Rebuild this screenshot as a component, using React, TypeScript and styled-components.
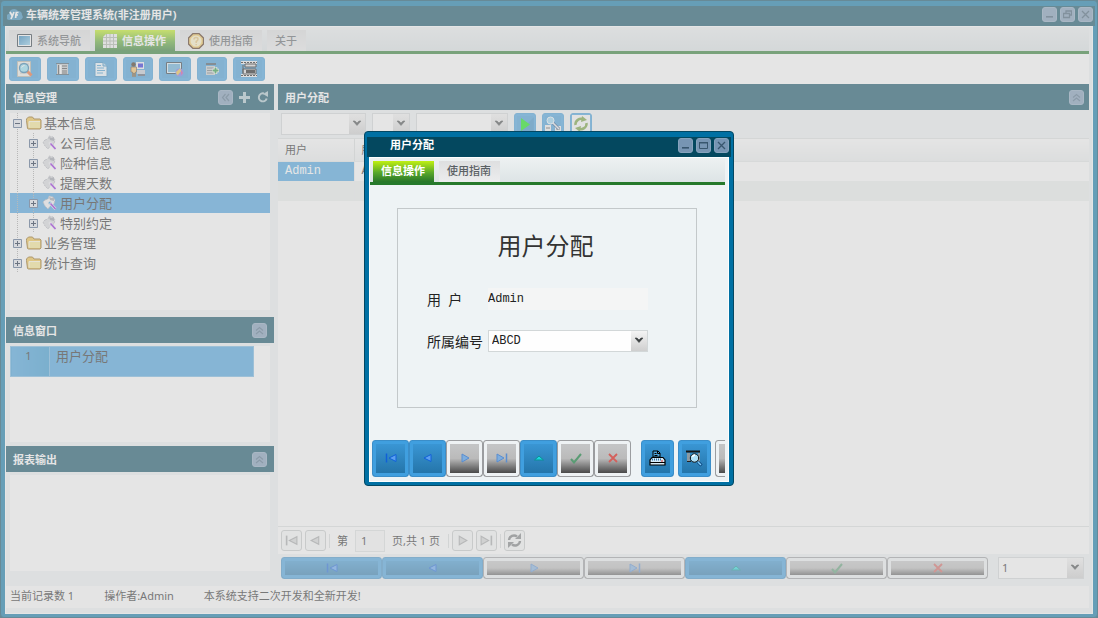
import React from "react";
import styled, { createGlobalStyle, css } from "styled-components";

const ui = `"Noto Sans", "Noto Sans CJK SC", sans-serif`;
const mono = `"Liberation Mono", "Noto Sans CJK SC", monospace`;

const GlobalStyle = createGlobalStyle`
  *, *::before, *::after { box-sizing: border-box; }
  body { margin: 0; background: #04485f; font: 11px/16px ${ui}; color: #222; }
  h1, h2, ul, p { margin: 0; padding: 0; font-weight: normal; list-style: none; }
  button, input, select { font: inherit; color: inherit; margin: 0; }
  svg { display: block; flex: none; }
`;

/* ---------- window chrome ---------- */

const WindowFrame = styled.div`
  display: flex;
  flex-direction: column;
  padding: 5px 4px 3px;
  border: 1px solid #034863;
  border-radius: 4px;
  background: #0070a3;
`;

const MainWindow = styled(WindowFrame)`
  min-height: 100vh;
`;

const TitleBar = styled.header<{ $inset?: boolean }>`
  display: flex;
  align-items: center;
  gap: 3px;
  height: 20px;
  margin: 0 -2px;
  padding: 0 2px 3px ${(p) => (p.$inset ? 23 : 4)}px;
  background: #04485f;
  color: #fff;
`;

const WindowTitle = styled.h1`
  flex: 1;
  font-size: 11px;
  font-weight: bold;
  line-height: 16px;
`;

const ChromeButton = styled.button`
  display: grid;
  place-items: center;
  width: 15px;
  height: 15px;
  padding: 0;
  border: 1px solid #86a3bd;
  border-radius: 3px;
  background: #7795b3;
`;

const ChromeGroup = styled.div`
  display: flex;
  gap: 3px;
`;

const WindowBody = styled.div`
  flex: 1;
  display: flex;
  flex-direction: column;
  min-width: 0;
  border: 1px solid #fcfefe;
  padding-right: 3px;
  background: #eef3f5;
`;

/* ---------- tabs ---------- */

const TabBar = styled.nav`
  display: flex;
  gap: 5px;
  padding: 3px 3px 0;
  border-bottom: 3px solid #26792b;
  background: linear-gradient(#edf1f2, #dde4e6);
`;

const Tab = styled.button<{ $active?: boolean }>`
  display: flex;
  align-items: center;
  gap: 5px;
  height: 21px;
  padding: 0 9px 0 8px;
  border: 0;
  background: linear-gradient(#dedfe0, #ecedee);
  color: #5a6064;
  font-weight: ${(p) => (p.$active ? "bold" : "500")};
  line-height: 16px;
  ${(p) =>
    p.$active &&
    css`
      background: linear-gradient(#c0f012, #58a82a 55%, #27752a);
      color: #fff;
    `}
`;

/* ---------- main toolbar ---------- */

const Toolbar = styled.div`
  display: flex;
  gap: 6px;
  padding: 3px;
  background: #fefefe;
`;

const blueFace = css`
  border: 1px solid #3b8ec9;
  background: linear-gradient(#3c99d8, #2272a6);
  box-shadow: inset 0 0 0 3px #409fdf;
`;

const greyFace = css`
  border: 1px solid #9b9da0;
  background: linear-gradient(#c3c4c5 15%, #bababa 50%, #484848 92%);
  box-shadow: inset 0 0 0 3px #eef2f4;
`;

const ToolButton = styled.button<{ $narrow?: boolean }>`
  display: grid;
  place-items: center;
  width: ${(p) => (p.$narrow ? 30 : 32)}px;
  height: 24px;
  padding: 0;
  border: 1px solid #3b98d6;
  border-radius: 3px;
  background: #3d98d6;
  box-shadow: inset 0 0 0 2px #409fdf;
`;

const SmallToolButton = styled(ToolButton)`
  width: 22px;
  height: 22px;
`;

/* ---------- panels ---------- */

const Workspace = styled.main`
  flex: 1;
  display: grid;
  grid-template-columns: 268px minmax(0, 1fr);
  column-gap: 4px;
`;

const SideColumn = styled.aside`
  display: flex;
  flex-direction: column;
  padding-bottom: 11px;
`;

const SideSection = styled.section<{ $grow?: boolean }>`
  display: flex;
  flex-direction: column;
  flex: ${(p) => (p.$grow ? "1 0 auto" : "none")};
  padding-bottom: ${(p) => (p.$grow ? 3 : 0)}px;
`;

const PanelHeader = styled.header<{ $tools?: boolean }>`
  display: flex;
  align-items: center;
  gap: 5px;
  height: 26px;
  padding: 0 ${(p) => (p.$tools ? 5 : 7)}px 0 7px;
  background: #04485f;
  color: #fff;
`;

const PanelTitle = styled.h2`
  flex: 1;
  padding-top: 2px;
  font-size: 11px;
  font-weight: bold;
  line-height: 16px;
`;

const PlainIconButton = styled.button`
  display: grid;
  place-items: center;
  width: 13px;
  height: 13px;
  padding: 0;
  border: 0;
  background: none;
  color: #a9c4cc;
`;

const Box = styled.div`
  flex: 1;
  min-height: 96px;
  margin: 3px 4px 4px;
  background: #fefefe;
`;

const Tree = styled.ul`
  font-size: 13px;
  line-height: 20px;
`;

const TreeRow = styled.li<{ $selected?: boolean }>`
  display: flex;
  align-items: center;
  height: 20px;
  background: ${(p) => (p.$selected ? "#429fe0" : "transparent")};
`;

const Guide = styled.span`
  display: flex;
  align-items: center;
  width: 16px;
  height: 20px;
  padding-left: 3px;
  background: repeating-linear-gradient(#a4a4a4 0 1px, transparent 1px 2px) 7px 0 / 1px 100% no-repeat;
`;

const TreeLabel = styled.span`
  margin-left: 2px;
`;

const WindowList = styled.table`
  width: 244px;
  border-collapse: collapse;
  background: #409fdf;
  font-size: 13px;
  line-height: 18px;

  th,
  td {
    height: 30px;
    padding: 0;
    border: 1px solid #6fb4e2;
    vertical-align: top;
    font-weight: normal;
    text-align: left;
  }
  th {
    width: 39px;
    padding-right: 3px;
    font-size: 11px;
    text-align: center;
    background: linear-gradient(90deg, #409fdf, #2a93cf);
  }
  td {
    padding-left: 6px;
  }
`;

/* ---------- combo box ---------- */

const ComboShell = styled.span<{ $width: number }>`
  position: relative;
  display: block;
  width: ${(p) => p.$width}px;
  height: 22px;
`;

const ComboSelect = styled.select`
  appearance: none;
  width: 100%;
  height: 22px;
  padding: 0 18px 0 3px;
  border: 1px solid #d2d7d8;
  border-radius: 0;
  background: linear-gradient(#f4f4f4, #cfcfcf) right 0 top 0 / 16px 100% no-repeat #fefefe;
`;

const ComboArrow = styled.svg`
  position: absolute;
  right: 4px;
  top: 7px;
  pointer-events: none;
`;

/* ---------- record grid ---------- */

const ContentPanel = styled.section`
  display: flex;
  flex-direction: column;
  min-width: 0;
`;

const FilterBar = styled.div`
  display: flex;
  gap: 6px;
  padding: 3px 3px;
`;

const GridArea = styled.div`
  flex: 1;
  border-top: 1px solid #dde1e1;
  background: #fefefe;
`;

const Records = styled.table`
  width: 100%;
  border-collapse: collapse;
  table-layout: fixed;

  th,
  td {
    padding: 0 7px;
    text-align: left;
    font-weight: normal;
    white-space: nowrap;
  }
  th {
    height: 22px;
    background: linear-gradient(#fdfdfd, #eceff0);
    border-right: 1px solid #d8dcdc;
    border-bottom: 1px solid #e2e6e6;
  }
  th:last-child {
    border-right: 0;
  }
  td {
    height: 20px;
    font: 12px/16px ${mono};
    border-right: 1px solid #eceff0;
  }
  td:last-child {
    border-right: 0;
  }
  td[data-current] {
    background: #409fdf;
    color: #fff;
  }
  tfoot td {
    background: #ecf0ee;
  }
`;

const FirstColumn = styled.col`
  width: 76px;
`;
const SecondColumn = styled.col`
  width: 90px;
`;

const Pager = styled.div`
  display: flex;
  align-items: center;
  height: 28px;
  padding: 0 3px;
  border-top: 1px solid #dde1e1;
  background: #fefefe;
`;

const PagerButton = styled.button`
  display: grid;
  place-items: center;
  width: 21px;
  height: 21px;
  margin-right: 3px;
  padding: 0;
  border: 1px solid #c4c8c8;
  border-radius: 3px;
  background: #f7f8f8;
`;

const Divider = styled.span`
  width: 1px;
  height: 14px;
  margin-right: 3px;
  background: #d8dcdc;
`;

const PageLabel = styled.label`
  display: flex;
  align-items: center;
  gap: 7px;
  margin: 0 8px 0 4px;
`;

const PageInput = styled.input`
  width: 30px;
  height: 22px;
  padding: 0 5px;
  border: 1px solid #dde1e1;
  background: #f8f9f9;
`;

const RecordNav = styled.div`
  display: flex;
  gap: 10px;
  padding: 3px 5px 7px 3px;
`;

const NavGroup = styled.div`
  flex: 1;
  display: flex;
`;

const NavButton = styled.button<{ $blue?: boolean }>`
  flex: 1;
  display: grid;
  place-items: center;
  height: 22px;
  padding: 0;
  border-radius: 3px;
  ${(p) => (p.$blue ? blueFace : greyFace)}
`;

const StatusBar = styled.footer`
  display: flex;
  gap: 30px;
  margin-bottom: 5px;
  padding: 2px 4px 4px;
  background: #fcfcfc;
`;

/* ---------- dialog ---------- */

const Mask = styled.div`
  position: fixed;
  inset: 0;
  display: grid;
  place-items: center;
  padding-bottom: 2px;
  background: rgba(204, 204, 204, 0.5);
`;

const DialogFrame = styled(WindowFrame)`
  width: 370px;
`;

const FormBox = styled.form`
  margin: 23px 28px 0 27px;
  padding: 21px 32px 55px 29px;
  border: 1px solid #c3c8ca;
  color: #222;
`;

const FormTitle = styled.h2`
  font-size: 24px;
  line-height: 32px;
  text-align: center;
  color: #333;
`;

const FormRow = styled.div`
  display: grid;
  grid-template-columns: 61px 160px;
  align-items: center;
  margin-top: 20px;
  font: 12px/16px ${mono};

  &:first-of-type {
    margin-top: 26px;
  }
  label {
    padding-top: 2px;
    font: 14px/20px ${ui};
    white-space: pre;
  }
`;

const ReadonlyInput = styled.input`
  height: 22px;
  width: 160px;
  padding: 0;
  border: 0;
  background: #f4f5f5;
`;

const DialogActions = styled.div`
  display: flex;
  margin: 32px 0 4px 2px;
  overflow: hidden;
`;

const SquareButton = styled(NavButton)<{ $tool?: boolean }>`
  flex: none;
  width: ${(p) => (p.$tool ? 33 : 37)}px;
  height: 37px;
`;

const ToolSet = styled.div`
  display: flex;
  gap: 4px;
  margin-left: 10px;
`;

/* ---------- icons ---------- */

const MinimizeIcon = () => (
  <svg width="9" height="9" viewBox="0 0 9 9"><path d="M1 6h7v1.6H1z" fill="#38566e" /></svg>
);
const MaximizeIcon = () => (
  <svg width="9" height="9" viewBox="0 0 9 9"><path d="M.5 1.5h8v6h-8z" fill="none" stroke="#38566e" /><path d="M0 1h9v1.5H0z" fill="#38566e" /></svg>
);
const RestoreIcon = () => (
  <svg width="9" height="9" viewBox="0 0 9 9"><path d="M3 3V1h5.5v4H6.5M.5 3.5h6v4h-6z" fill="none" stroke="#38566e" strokeWidth="1.3" /></svg>
);
const CloseIcon = () => (
  <svg width="9" height="9" viewBox="0 0 9 9"><path d="M1 1l7 7M8 1L1 8" stroke="#38566e" strokeWidth="1.3" /></svg>
);
const CollapseIcon = ({ side }: { side?: boolean }) => (
  <svg width="9" height="9" viewBox="0 0 9 9">
    <path
      d={side ? "M4.5 1L1.5 4.5l3 3.5M8 1L5 4.5 8 8" : "M1 4.5l3.5-3 3.5 3M1 8l3.5-3L8 8"}
      fill="none" stroke="#4b6b85" strokeWidth="1.2"
    />
  </svg>
);
const PlusIcon = () => (
  <svg width="11" height="11" viewBox="0 0 11 11"><path d="M4 0h3v4h4v3H7v4H4V7H0V4h4z" fill="currentColor" /></svg>
);
const ReloadIcon = () => (
  <svg width="12" height="12" viewBox="0 0 12 12">
    <path d="M7 2.5A4 4 0 1 0 9.7 7.5" fill="none" stroke="currentColor" strokeWidth="2" />
    <path d="M6 3l5-3v6z" fill="currentColor" />
  </svg>
);
const AppLogo = () => (
  <svg width="16" height="14" viewBox="0 0 16 14">
    <path d="M3 12a3 3 0 0 1-1-6 5 5 0 0 1 9-3 4 4 0 0 1 4 4 3 3 0 0 1-2 5z" fill="#2d86b8" />
    <path d="M3 4l2.3 4L7 4M5.3 8L4 11M11.5 4.5H9.3L8.6 10M8 7h3" fill="none" stroke="#fff" strokeWidth="1.7" />
  </svg>
);
const ScreenIcon = () => (
  <svg width="15" height="13" viewBox="0 0 15 13">
    <defs><linearGradient id="scr" x1="0" y1="0" x2="1" y2="1"><stop stopColor="#1f7cb8" /><stop offset="1" stopColor="#8fd0ee" /></linearGradient></defs>
    <path d="M.5.5h14v12H.5z" fill="#fff" stroke="#22303a" /><path d="M2 2h11v9H2z" fill="url(#scr)" />
  </svg>
);
const GridIcon = () => (
  <svg width="14" height="14" viewBox="0 0 14 14">
    <path d="M3 0h11v14H0V3z" fill="#f2f2f2" />
    <path d="M3.5 0v14M7 0v14M10.5 0v14M0 3.5h14M0 7h14M0 10.5h14" stroke="#a9b3a4" />
  </svg>
);
const HelpIcon = () => (
  <svg width="16" height="16" viewBox="0 0 16 16">
    <path d="M5 .5h6L15.500 5v6L11 15.500H5L.5 11V5z" fill="#f5c858" stroke="#4a260c" strokeWidth="1.3" />
    <circle cx="8" cy="8" r="5.500" fill="#fdf3c4" />
    <path d="M6 6.500Q6 4.500 8 4.500t2 1.700Q10 7.500 8.200 8.500V10M8.200 11v1.200" fill="none" stroke="#e6c070" strokeWidth="1.500" />
  </svg>
);
const SearchDocIcon = () => (
  <svg width="16" height="16" viewBox="0 0 16 16">
    <path d="M.5.5h13v15H.5z" fill="#f1efe6" stroke="#b5b2a4" /><path d="M3 3h9M3 12h7" stroke="#b8b8b4" />
    <path d="M10 10l4.500 4.500" stroke="#f0642a" strokeWidth="3" />
    <circle cx="7" cy="7" r="4.500" fill="#8fe0f4" stroke="#2878a8" strokeWidth="1.300" /><path d="M4.500 6.500q1-2 3-2" stroke="#fff" fill="none" />
  </svg>
);
const ListIcon = () => (
  <svg width="16" height="14" viewBox="0 0 16 14">
    <path d="M2 1h11v12H2z" fill="#c4c8ca" /><path d="M1 1.500h13M1 12.500h13" stroke="#3c5666" /><path d="M3.500 3v9M7 4h5M7 6.500h5M7 9h5M7 11h5" stroke="#444" />
    <path d="M5 3h1.500v9H5z" fill="#fff" />
  </svg>
);
const DocIcon = () => (
  <svg width="14" height="15" viewBox="0 0 14 15">
    <path d="M1 .5h8L13 4v10.500H1z" fill="#e9f5fd" stroke="#2f86c0" /><path d="M9 .5V4h4" fill="#a8d5ef" stroke="#2f86c0" />
    <path d="M3 3.500h4M3 6h7M3 8.500h8M3 11h6" stroke="#3f98d0" />
  </svg>
);
const UserPcIcon = () => (
  <svg width="16" height="16" viewBox="0 0 16 16">
    <path d="M6 1h8v7H6z" fill="#eef0f5" /><path d="M8 2.500h5v4H8z" fill="#2320d8" /><path d="M7 9h8v4H7z" fill="#c3c8d2" /><path d="M8 13h7v2H8z" fill="#555d6c" />
    <circle cx="3.500" cy="3.500" r="2.200" fill="#3a2410" /><path d="M1 6h5.500v5H5.500v4.500h-1V12h-1v3.500h-1V11H1z" fill="#f7bf60" stroke="#5c3c1b" strokeWidth=".7" />
  </svg>
);
const ScreenGlobeIcon = () => (
  <svg width="18" height="15" viewBox="0 0 18 15">
    <path d="M.5.500h15v11H.5z" fill="#d9eef8" stroke="#22303a" /><path d="M2 2h12v8H2z" fill="#5cabd8" />
    <circle cx="13.500" cy="10.500" r="4" fill="#7070e8" /><path d="M10 10q3-3 4-3.500 2 2 0 4t-2 3q-2-1-2-3.500z" fill="#f0c03e" /><path d="M15 8l2 3-2 2z" fill="#d63f90" />
  </svg>
);
const DatabaseAddIcon = () => (
  <svg width="14" height="14" viewBox="0 0 14 14">
    <path d="M1 1h10v2H1z" fill="#3c4f5a" /><path d="M1 4h9v9H1z" fill="#c6ccce" /><path d="M2 6h7M2 8.500h7M2 11h7" stroke="#6b767b" />
    <path d="M10.500 5v7M7 8.500h7" stroke="#fff" strokeWidth="3.500" /><path d="M10.500 5.500v6M7.500 8.500h6" stroke="#1f923b" strokeWidth="1.800" />
  </svg>
);
const PrinterBigIcon = () => (
  <svg width="18" height="16" viewBox="0 0 18 16">
    <path d="M1 0h16v3H1zM1 13h16v3H1z" fill="#efefef" /><path d="M1 1.500h16M1 14.500h16" stroke="#111" strokeDasharray="2 1" />
    <path d="M5 3h11v3H5zM3 8h13v5H3z" fill="#dfdfdf" stroke="#111" /><path d="M6 9h9v3H6z" fill="#111" /><path d="M3 4v8" stroke="#111" />
  </svg>
);
const PlayIcon = () => (
  <svg width="18" height="18" viewBox="0 0 18 18"><path d="M18 2v16H2z" fill="#237cb8" opacity=".5" /><path d="M5 3l9 6.500L5 16z" fill="#04e604" /></svg>
);
const FindIcon = () => (
  <svg width="16" height="16" viewBox="0 0 16 16">
    <path d="M0 9h6v7H0zM10 10h6v6h-6z" fill="#f1f1f1" /><path d="M1 12h4M11 13h4" stroke="#555" />
    <path d="M8 7l6 6" stroke="#1c4a7c" strokeWidth="3" /><path d="M8 7l6 6" stroke="#e8eef5" strokeWidth="1.600" />
    <circle cx="5.500" cy="4.500" r="3.500" fill="#8fd2f2" stroke="#e9f5fb" />
  </svg>
);
const RefreshBoxIcon = () => (
  <svg width="18" height="18" viewBox="0 0 18 18">
    <path d="M0 0h18v18H0z" fill="#f8f8f8" />
    <path d="M3.500 10a5.500 5.500 0 0 1 8-5.500M14.500 8a5.500 5.500 0 0 1-8 5.500" fill="none" stroke="#6f9c32" strokeWidth="2.500" />
    <path d="M10 1l5 4-6 2zM8 17l-5-4 6-2z" fill="#6f9c32" />
  </svg>
);
const FolderIcon = () => (
  <svg width="16" height="14" viewBox="0 0 16 14">
    <path d="M1.500 12.500l-1-8V3l2-2h4l1.500 2h6l1 1v8l-1 1H2.500z" fill="#f0c040" stroke="#8f6410" /><path d="M3 5h11v7H3z" fill="#f8e88c" /><path d="M3 11.500V5.500h11" stroke="#fffbe0" fill="none" />
  </svg>
);
const LeafIcon = ({ lit }: { lit?: boolean }) => (
  <svg width="16" height="16" viewBox="0 0 16 16">
    <path d="M3 5l3-1 1-3 4 1 2 3-1 4-3 1-3 4-3-3-2-4z" fill={lit ? "#f1f1f4" : "#d9dade"} stroke="#a6a9b2" strokeWidth=".8" strokeDasharray="2 1" />
    <path d="M7 2l3 1 2-1v4l-4-1z" fill="#9a9ea8" />
    <circle cx="8" cy="8" r="1.500" fill={lit ? "#2a98e0" : "#e8eaee"} />
    <path d="M8 8l5.500 6" stroke="#f0eaf8" strokeWidth="2.600" /><path d="M8.500 8.500l5 5.500" stroke="#8a12d8" strokeWidth="1.500" />
  </svg>
);
const Expander = ({ open }: { open?: boolean }) => (
  <svg width="9" height="9" viewBox="0 0 9 9">
    <path d="M.5.500h8v8h-8z" fill="#e3e7ef" stroke="#4a6488" /><path d={open ? "M2 4.500h5" : "M2 4.500h5M4.500 2v5"} stroke="#0c1c38" />
  </svg>
);

type NavKind = "first" | "prev" | "next" | "last" | "up" | "ok" | "cancel";

const NavIcon = ({ kind, grey }: { kind: NavKind; grey?: boolean }) => {
  const dark = grey ? "#a2a5a6" : "#1060d8";
  const pale = grey ? "#d4d6d6" : "#5ba0f0";
  const soft = grey ? "#a2a5a6" : "#5a8ed0";
  const size = grey ? 13 : 12;
  return (
    <svg width={size} height={size} viewBox="0 0 12 12">
      {kind === "first" && (<><path d="M1.500 1.500v9" stroke={dark} strokeWidth="1.500" /><path d="M11 2.500v7L4 6z" fill={pale} stroke={dark} /></>)}
      {kind === "prev" && <path d="M9 2.500v7L2 6z" fill={pale} stroke={dark} />}
      {kind === "next" && <path d="M3 2v8l7-4z" fill={grey ? pale : "#7faede"} stroke={soft} />}
      {kind === "last" && (<><path d="M1 2v8l7-4z" fill={grey ? pale : "#7faede"} stroke={soft} /><path d="M10.500 1.500v9" stroke={soft} strokeWidth="1.500" /></>)}
      {kind === "up" && <path d="M6 4l4.500 4h-9z" fill="#19d6de" stroke="#0b8f96" />}
      {kind === "ok" && <path d="M1 7l3 3.500L11 2" fill="none" stroke="#5a9c74" strokeWidth="2" />}
      {kind === "cancel" && <path d="M2 2l8 8M10 2l-8 8" fill="none" stroke="#d4605c" strokeWidth="1.800" />}
    </svg>
  );
};
const CyclePageIcon = () => (
  <svg width="15" height="15" viewBox="0 0 15 15">
    <path d="M2 7a5 5 0 0 1 8-3.500M13 8a5 5 0 0 1-8 3.500" fill="none" stroke="#74787a" strokeWidth="2.400" />
    <path d="M8 6h6V0zM7 9H1v6z" fill="#7a7e80" />
  </svg>
);
const PrinterIcon = () => (
  <svg width="17" height="16" viewBox="0 0 17 16">
    <path d="M4 7V1h5l2 2v4z" fill="#4ea4dc" stroke="#000" /><path d="M5.500 3.500h2M5.500 5.500h3M8.500 1v2.500H11" stroke="#000" fill="none" />
    <path d="M3 7.500h11l2 2.500v5H1v-5z" fill="#d8ecf8" stroke="#000" strokeWidth="1.200" /><path d="M1 12.500h15" stroke="#000" />
    <path d="M3 9.500h10" stroke="#2f6fa4" strokeWidth="2" strokeDasharray="1 1" /><path d="M12 11h2" stroke="#e03030" />
  </svg>
);
const PreviewIcon = () => (
  <svg width="17" height="17" viewBox="0 0 17 17">
    <path d="M0 1.500h14" stroke="#161616" strokeWidth="2" /><path d="M1 3h3v9H1zM12 3h2v9h-2z" fill="#8d9aa2" /><path d="M1 11.500h4" stroke="#222" />
    <circle cx="8.500" cy="8" r="4.200" fill="#aee0f8" stroke="#111" /><path d="M6.500 7q.5-2 2.500-2" stroke="#fff" fill="none" strokeWidth="1.300" />
    <path d="M12 12l3.500 3.500" stroke="#0a3f78" strokeWidth="3" /><path d="M12 12l3 3" stroke="#7cd0ff" strokeWidth="1.500" />
  </svg>
);

/* ---------- composed parts ---------- */

function Combo({ id, label, width, value }: { id: string; label?: string; width: number; value?: string }) {
  return (
    <ComboShell $width={width}>
      <ComboSelect id={id} aria-label={label} defaultValue={value}>
        <option>{value ?? ""}</option>
      </ComboSelect>
      <ComboArrow width="10" height="7" viewBox="0 0 10 7">
        <path d="M1 1h2L5 3l2-2h2L5 5.500z" fill="#3d4142" stroke="#3d4142" strokeWidth=".6" />
      </ComboArrow>
    </ComboShell>
  );
}

type TreeItem = { label: string; level: 0 | 1; leaf?: boolean; open?: boolean; selected?: boolean };

const treeItems: TreeItem[] = [
  { label: "基本信息", level: 0, open: true },
  { label: "公司信息", level: 1 },
  { label: "险种信息", level: 1 },
  { label: "提醒天数", level: 1, leaf: true },
  { label: "用户分配", level: 1, selected: true },
  { label: "特别约定", level: 1 },
  { label: "业务管理", level: 0 },
  { label: "统计查询", level: 0 },
];

const navKinds: { kind: NavKind; label: string; blue?: boolean }[] = [
  { kind: "first", label: "首条", blue: true },
  { kind: "prev", label: "上一条", blue: true },
  { kind: "next", label: "下一条" },
  { kind: "last", label: "末条" },
  { kind: "up", label: "编辑", blue: true },
  { kind: "ok", label: "确定" },
  { kind: "cancel", label: "取消" },
];

const tools = [
  { label: "查找", icon: <SearchDocIcon /> },
  { label: "列表", icon: <ListIcon /> },
  { label: "文档", icon: <DocIcon /> },
  { label: "用户", icon: <UserPcIcon />, narrow: true },
  { label: "网络", icon: <ScreenGlobeIcon /> },
  { label: "添加", icon: <DatabaseAddIcon />, narrow: true },
  { label: "打印", icon: <PrinterBigIcon /> },
];

function CollapseButton({ side }: { side?: boolean }) {
  return (
    <ChromeButton aria-label="折叠">
      <CollapseIcon side={side} />
    </ChromeButton>
  );
}

function AssignDialog() {
  return (
    <Mask>
      <DialogFrame role="dialog" aria-label="用户分配">
        <TitleBar $inset>
          <WindowTitle>用户分配</WindowTitle>
          <ChromeGroup>
            <ChromeButton aria-label="最小化"><MinimizeIcon /></ChromeButton>
            <ChromeButton aria-label="最大化"><MaximizeIcon /></ChromeButton>
            <ChromeButton aria-label="关闭"><CloseIcon /></ChromeButton>
          </ChromeGroup>
        </TitleBar>
        <WindowBody>
          <TabBar>
            <Tab $active>信息操作</Tab>
            <Tab>使用指南</Tab>
          </TabBar>
          <FormBox>
            <FormTitle>用户分配</FormTitle>
            <FormRow>
              <label htmlFor="user">用  户</label>
              <ReadonlyInput id="user" readOnly value="Admin" />
            </FormRow>
            <FormRow>
              <label htmlFor="code">所属编号</label>
              <Combo id="code" width={160} value="ABCD" />
            </FormRow>
          </FormBox>
          <DialogActions>
            {navKinds.map((n) => (
              <SquareButton key={n.kind} $blue={n.blue} aria-label={n.label}>
                <NavIcon kind={n.kind} />
              </SquareButton>
            ))}
            <ToolSet>
              <SquareButton $blue $tool aria-label="打印"><PrinterIcon /></SquareButton>
              <SquareButton $blue $tool aria-label="预览"><PreviewIcon /></SquareButton>
              <SquareButton $tool aria-label="更多" />
            </ToolSet>
          </DialogActions>
        </WindowBody>
      </DialogFrame>
    </Mask>
  );
}

export default function App() {
  return (
    <>
      <GlobalStyle />
      <MainWindow>
        <TitleBar>
          <AppLogo />
          <WindowTitle>车辆统筹管理系统(非注册用户)</WindowTitle>
          <ChromeGroup>
            <ChromeButton aria-label="最小化"><MinimizeIcon /></ChromeButton>
            <ChromeButton aria-label="还原"><RestoreIcon /></ChromeButton>
            <ChromeButton aria-label="关闭"><CloseIcon /></ChromeButton>
          </ChromeGroup>
        </TitleBar>
        <WindowBody>
          <TabBar>
            <Tab><ScreenIcon />系统导航</Tab>
            <Tab $active><GridIcon />信息操作</Tab>
            <Tab><HelpIcon />使用指南</Tab>
            <Tab>关于</Tab>
          </TabBar>
          <Toolbar>
            {tools.map((t) => (
              <ToolButton key={t.label} $narrow={t.narrow} aria-label={t.label}>{t.icon}</ToolButton>
            ))}
          </Toolbar>
          <Workspace>
            <SideColumn>
              <SideSection $grow>
                <PanelHeader $tools>
                  <PanelTitle>信息管理</PanelTitle>
                  <CollapseButton side />
                  <PlainIconButton aria-label="新增"><PlusIcon /></PlainIconButton>
                  <PlainIconButton aria-label="刷新"><ReloadIcon /></PlainIconButton>
                </PanelHeader>
                <Box>
                  <Tree>
                    {treeItems.map((item) => (
                      <TreeRow key={item.label} $selected={item.selected}>
                        {item.level === 1 && <Guide />}
                        <Guide>{!item.leaf && <Expander open={item.open} />}</Guide>
                        {item.level === 0 ? <FolderIcon /> : <LeafIcon lit={item.selected} />}
                        <TreeLabel>{item.label}</TreeLabel>
                      </TreeRow>
                    ))}
                  </Tree>
                </Box>
              </SideSection>
              <SideSection>
                <PanelHeader>
                  <PanelTitle>信息窗口</PanelTitle>
                  <CollapseButton />
                </PanelHeader>
                <Box>
                  <WindowList>
                    <tbody>
                      <tr><th scope="row">1</th><td>用户分配</td></tr>
                    </tbody>
                  </WindowList>
                </Box>
              </SideSection>
              <SideSection>
                <PanelHeader>
                  <PanelTitle>报表输出</PanelTitle>
                  <CollapseButton />
                </PanelHeader>
                <Box />
              </SideSection>
            </SideColumn>
            <ContentPanel>
              <PanelHeader $tools>
                <PanelTitle>用户分配</PanelTitle>
                <CollapseButton />
              </PanelHeader>
              <FilterBar>
                <Combo id="field" label="字段" width={85} />
                <Combo id="operator" label="条件" width={38} />
                <Combo id="operand" label="值" width={92} />
                <SmallToolButton aria-label="执行"><PlayIcon /></SmallToolButton>
                <SmallToolButton aria-label="查找"><FindIcon /></SmallToolButton>
                <SmallToolButton aria-label="刷新"><RefreshBoxIcon /></SmallToolButton>
              </FilterBar>
              <GridArea>
                <Records>
                  <colgroup><FirstColumn /><SecondColumn /><col /></colgroup>
                  <thead>
                    <tr><th>用户</th><th>所属编号</th><th /></tr>
                  </thead>
                  <tbody>
                    <tr><td data-current>Admin</td><td>ABCD</td><td /></tr>
                  </tbody>
                  <tfoot>
                    <tr><td /><td /><td /></tr>
                  </tfoot>
                </Records>
              </GridArea>
              <Pager>
                <PagerButton aria-label="首页"><NavIcon kind="first" grey /></PagerButton>
                <PagerButton aria-label="上一页"><NavIcon kind="prev" grey /></PagerButton>
                <Divider />
                <PageLabel>第 <PageInput defaultValue="1" /> 页,共 1 页</PageLabel>
                <Divider />
                <PagerButton aria-label="下一页"><NavIcon kind="next" grey /></PagerButton>
                <PagerButton aria-label="末页"><NavIcon kind="last" grey /></PagerButton>
                <Divider />
                <PagerButton aria-label="刷新"><CyclePageIcon /></PagerButton>
              </Pager>
              <RecordNav>
                <NavGroup>
                  {navKinds.map((n) => (
                    <NavButton key={n.kind} $blue={n.blue} aria-label={n.label}>
                      <NavIcon kind={n.kind} />
                    </NavButton>
                  ))}
                </NavGroup>
                <Combo id="record" label="记录" width={86} value="1" />
              </RecordNav>
            </ContentPanel>
          </Workspace>
          <StatusBar>
            <span>当前记录数 1</span>
            <span>操作者:Admin</span>
            <span>本系统支持二次开发和全新开发!</span>
          </StatusBar>
        </WindowBody>
      </MainWindow>
      <AssignDialog />
    </>
  );
}
